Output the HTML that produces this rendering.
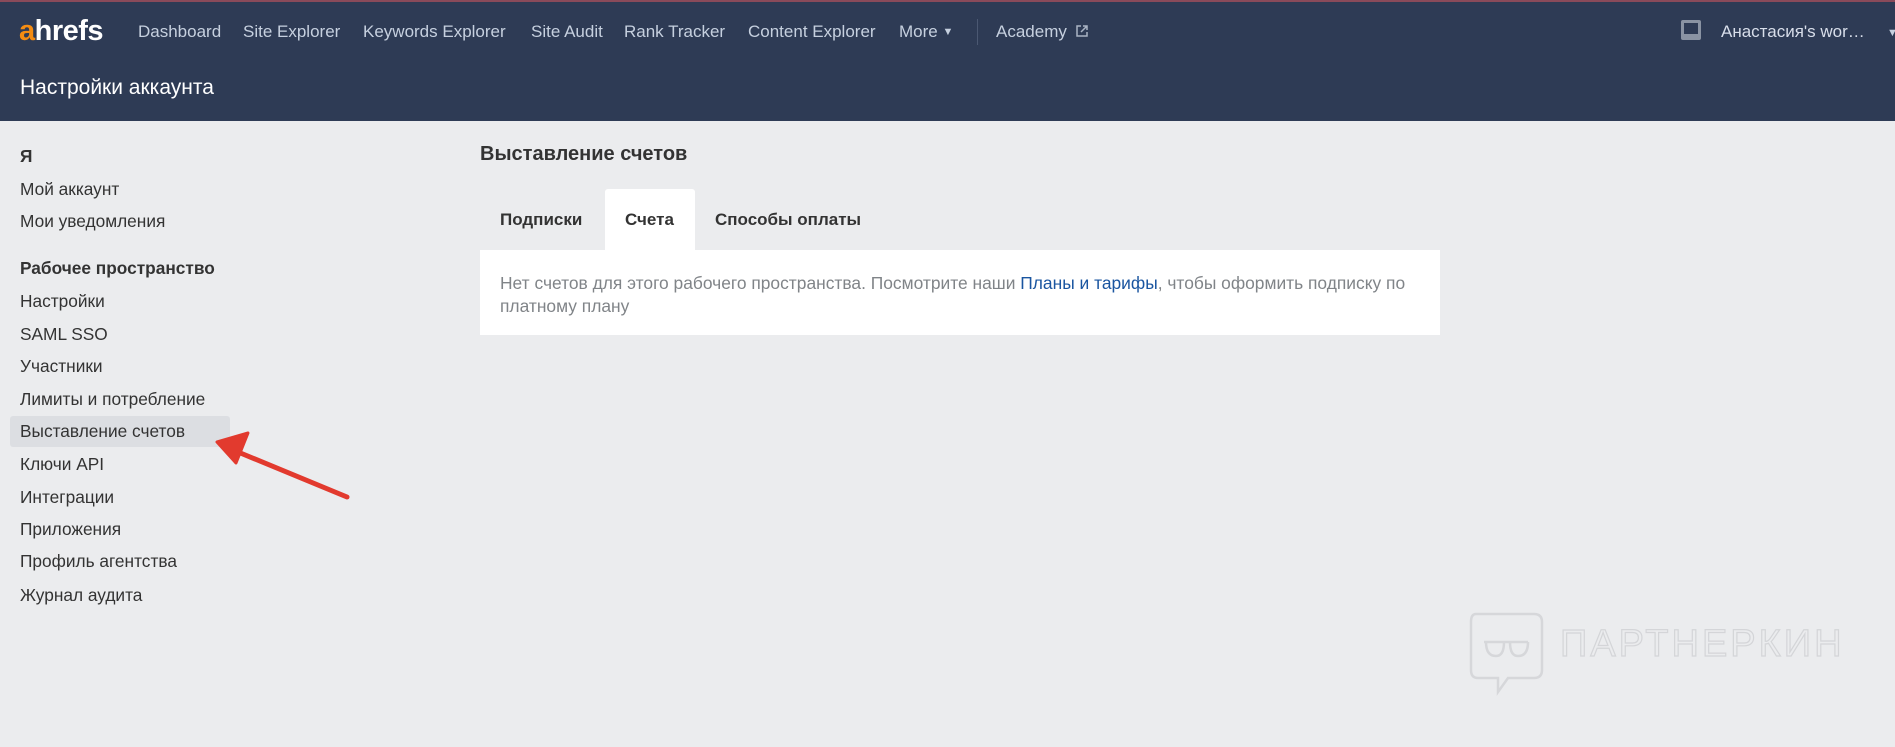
<!DOCTYPE html>
<html><head><meta charset="utf-8"><style>
*{margin:0;padding:0;box-sizing:border-box}
body{width:1895px;height:747px;background:#ebecee;font-family:"Liberation Sans",Arial,sans-serif;position:relative;overflow:hidden}
.hdr{position:absolute;left:0;top:0;width:1895px;height:121px;background:#2e3b55;border-top:2px solid #8a4a5a}
.a{position:absolute;white-space:nowrap}
.nav{top:20px;font-size:17px;color:#c6d0df}
.side{font-size:17.3px;color:#333;left:20px}
</style></head><body>
<div class="hdr">
 <div class="a" style="left:19px;top:13px;font-size:29px;font-weight:bold;color:#fff;letter-spacing:-0.5px"><span style="color:#f48c12">a</span>hrefs</div>
 <div class="a nav" style="left:138px">Dashboard</div>
 <div class="a nav" style="left:243px">Site Explorer</div>
 <div class="a nav" style="left:363px">Keywords Explorer</div>
 <div class="a nav" style="left:531px">Site Audit</div>
 <div class="a nav" style="left:624px">Rank Tracker</div>
 <div class="a nav" style="left:748px">Content Explorer</div>
 <div class="a nav" style="left:899px">More <span style="font-size:11px;vertical-align:2px">▼</span></div>
 <div class="a" style="left:977px;top:17px;width:1px;height:26px;background:#4b5872"></div>
 <div class="a nav" style="left:996px">Academy <svg width="14" height="14" viewBox="0 0 14 14" style="vertical-align:-1px;margin-left:3px"><path d="M6 2H2v10h10V8M8 2h4v4M12 2L6 8" fill="none" stroke="#aab4c4" stroke-width="1.5"/></svg></div>
 <div class="a" style="left:1681px;top:18px;width:20px;height:20px;background:#8a93a3;border-radius:2px"><div style="position:absolute;left:3px;top:3px;width:14px;height:11px;background:#2e3b55"></div></div>
 <div class="a nav" style="left:1721px;color:#d8deea">Анастасия's wor…</div>
 <div class="a nav" style="left:1887px;font-size:11px;top:25px">▼</div>
 <div class="a" style="left:20px;top:74px;font-size:21px;color:#fff">Настройки аккаунта</div>
</div>

<div class="a" style="left:10px;top:416px;width:220px;height:31px;background:#dcdee2;border-radius:3px"></div>
<div class="a side" style="top:146px;font-weight:bold">Я</div>
<div class="a side" style="top:179px">Мой аккаунт</div>
<div class="a side" style="top:211px">Мои уведомления</div>
<div class="a side" style="top:258px;font-weight:bold">Рабочее пространство</div>
<div class="a side" style="top:291px">Настройки</div>
<div class="a side" style="top:324px">SAML SSO</div>
<div class="a side" style="top:356px">Участники</div>
<div class="a side" style="top:389px">Лимиты и потребление</div>
<div class="a side" style="top:421px">Выставление счетов</div>
<div class="a side" style="top:454px">Ключи API</div>
<div class="a side" style="top:487px">Интеграции</div>
<div class="a side" style="top:519px">Приложения</div>
<div class="a side" style="top:551px">Профиль агентства</div>
<div class="a side" style="top:585px">Журнал аудита</div>

<svg class="a" style="left:0;top:0" width="400" height="600"><path d="M347 497L238 452" stroke="#e23a2e" stroke-width="5" stroke-linecap="round"/><path d="M217 442L248 433L236 463Z" fill="#e23a2e" stroke="#e23a2e" stroke-width="3" stroke-linejoin="round"/></svg>

<div class="a" style="left:480px;top:143px;font-size:20px;font-weight:bold;color:#333">Выставление счетов</div>
<div class="a" style="left:605px;top:189px;width:90px;height:62px;background:#fff;border-radius:3px 3px 0 0"></div>
<div class="a" style="left:500px;top:210px;font-size:17px;font-weight:bold;color:#333">Подписки</div>
<div class="a" style="left:625px;top:210px;font-size:17px;font-weight:bold;color:#333">Счета</div>
<div class="a" style="left:715px;top:210px;font-size:17px;font-weight:bold;color:#333">Способы оплаты</div>
<div class="a" style="left:480px;top:250px;width:960px;height:85px;background:#fff"></div>
<div class="a" style="left:500px;top:272px;width:920px;font-size:17.4px;line-height:23px;color:#808488;white-space:normal">Нет счетов для этого рабочего пространства. Посмотрите наши <span style="color:#1a55a0">Планы и тарифы</span>, чтобы оформить подписку по платному плану</div>

<svg class="a" style="left:1468px;top:612px" width="80" height="84" viewBox="0 0 80 84"><path d="M8 2H66Q74 2 74 10V58Q74 66 66 66H40L30 80V66H10Q3 66 3 58V10Q3 2 8 2Z" fill="none" stroke="#d6d7da" stroke-width="2.5"/><path d="M16 30H60M18 30Q18 44 28 44Q36 44 36 30M42 30Q42 44 50 44Q60 44 60 30" fill="none" stroke="#d6d7da" stroke-width="2.5"/></svg>
<div class="a" style="left:1560px;top:623px;font-size:38px;color:transparent;-webkit-text-stroke:1.2px #d4d5d8;letter-spacing:3px">ПАРТНЕРКИН</div>
</body></html>
